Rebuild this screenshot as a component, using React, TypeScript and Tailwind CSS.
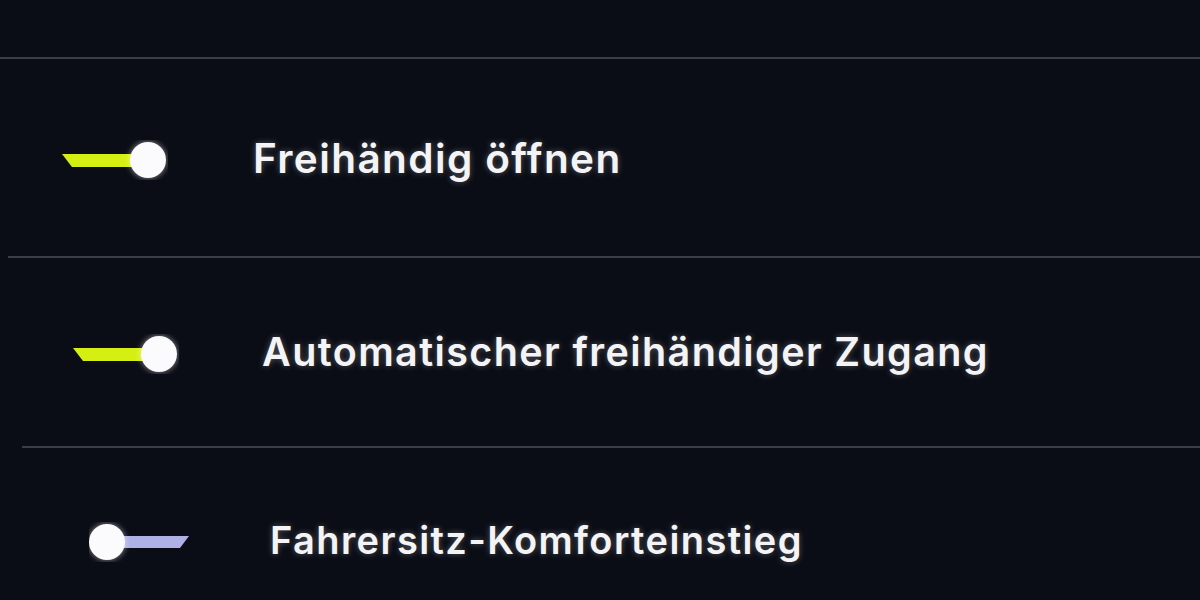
import React, { useState } from "react";

type ToggleProps = {
    on: boolean;
    onChange: () => void;
};

// Slanted bar with a round knob; the bar is lime when on, lavender when off
const Toggle = ({ on, onChange }: ToggleProps) => {
    return (
        <button onClick={onChange} className="shrink-0 w-[106px] h-[40px] cursor-pointer" aria-pressed={on}>
            <svg width="106" height="40" viewBox="0 0 106 40">
                <defs>
                    <filter id="knobGlow" x="-50%" y="-50%" width="200%" height="200%">
                        <feGaussianBlur stdDeviation="2.5" />
                    </filter>
                </defs>
                {on ? (
                    <>
                        <polygon points="0,14 70,14 70,27 10,27" fill="#d6ef12" />
                        <circle cx="86" cy="20" r="19.5" fill="#ffffff" opacity="0.35" filter="url(#knobGlow)" />
                        <circle cx="86" cy="20" r="18" fill="#fbfbfd" />
                    </>
                ) : (
                    <>
                        <polygon points="34,14 100,14 91,26 34,26" fill="#aeb0e6" />
                        <circle cx="18" cy="20" r="19.5" fill="#ffffff" opacity="0.35" filter="url(#knobGlow)" />
                        <circle cx="18" cy="20" r="18" fill="#fbfbfd" />
                    </>
                )}
            </svg>
        </button>
    );
};

const labelClass =
    "font-semibold text-[#f4f4f6] tracking-[1.4px] [font-family:Inter,'Noto_Sans',sans-serif] [text-shadow:0_0_6px_rgba(255,255,255,0.3)] whitespace-nowrap";

const App = () => {
    const [handsFree, setHandsFree] = useState<boolean>(true);
    const [autoAccess, setAutoAccess] = useState<boolean>(true);
    const [easyEntry, setEasyEntry] = useState<boolean>(false);

    return (
        <div className="w-[1200px] h-[600px] overflow-hidden bg-[#0b0d16] flex flex-col">
            <div className="h-[57px] shrink-0" />

            <div className="h-[199px] shrink-0 border-t-2 border-[#3b3d46] flex items-center pt-[4px] pl-[62px]">
                <Toggle on={handsFree} onChange={() => setHandsFree(!handsFree)} />
                <span className={`${labelClass} text-[40.5px] ml-[85px]`}>Freihändig öffnen</span>
            </div>

            <div className="h-[190px] shrink-0 ml-[8px] border-t-2 border-[#3b3d46] flex items-center pt-[4px] pl-[65px]">
                <Toggle on={autoAccess} onChange={() => setAutoAccess(!autoAccess)} />
                <span className={`${labelClass} text-[39.5px] ml-[83px] -mt-[3px]`}>Automatischer freihändiger Zugang</span>
            </div>

            <div className="flex-1 ml-[22px] border-t-2 border-[#3b3d46] flex items-start pt-[74px] pl-[67px]">
                <Toggle on={easyEntry} onChange={() => setEasyEntry(!easyEntry)} />
                <span className={`${labelClass} text-[38px] ml-[75px] -mt-[10px]`}>Fahrersitz-Komforteinstieg</span>
            </div>
        </div>
    );
};

export default App;
